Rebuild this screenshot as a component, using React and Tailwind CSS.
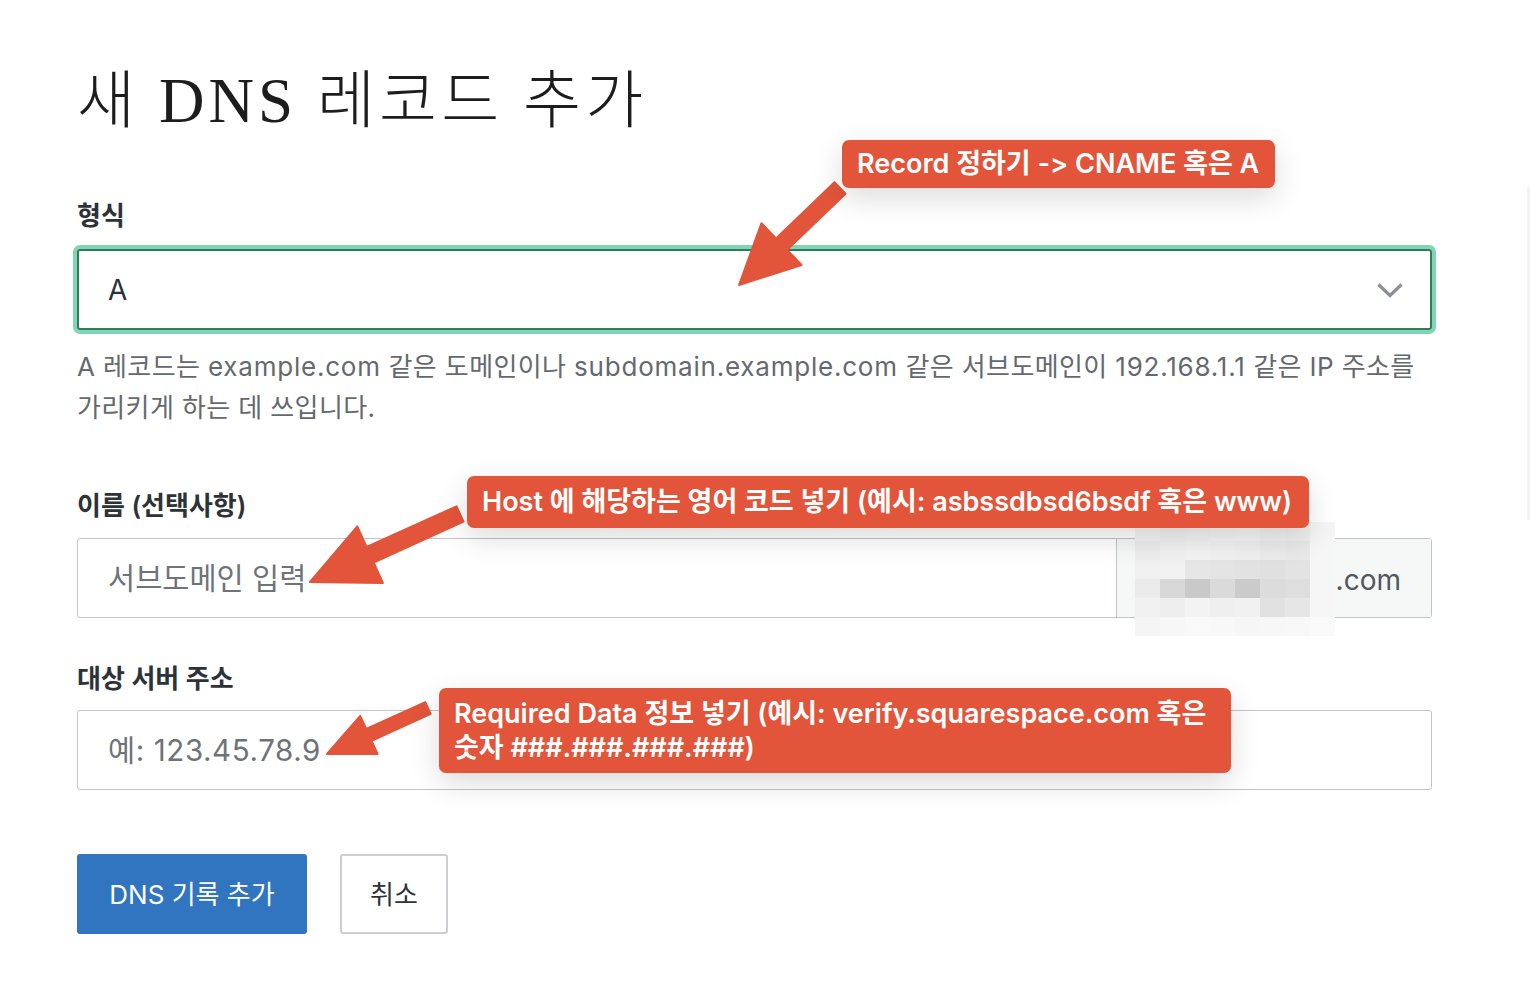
import React from 'react'

// arrow polygon from tail -> tip
function arrowPoints(sx, sy, tx, ty, L, W, w) {
  const dx = tx - sx
  const dy = ty - sy
  const len = Math.sqrt(dx * dx + dy * dy)
  const ux = dx / len
  const uy = dy / len
  const nx = -uy
  const ny = ux
  const bx = tx - ux * L
  const by = ty - uy * L
  const pts = [
    [sx + (nx * w) / 2, sy + (ny * w) / 2],
    [bx + (nx * w) / 2, by + (ny * w) / 2],
    [bx + (nx * W) / 2, by + (ny * W) / 2],
    [tx, ty],
    [bx - (nx * W) / 2, by - (ny * W) / 2],
    [bx - (nx * w) / 2, by - (ny * w) / 2],
    [sx - (nx * w) / 2, sy - (ny * w) / 2],
  ]
  return pts.map((p) => p[0].toFixed(1) + ',' + p[1].toFixed(1)).join(' ')
}

const arrows = [
  [840, 188, 739, 285, 59, 58, 16],
  [460, 514, 310, 582, 66, 62, 17],
  [428, 708, 327, 754, 46, 42, 13],
]

// pixelated blur over the domain name
const blurCells = [
  ['#f4f4f4', '#f0f0f0', '#f2f2f2', '#f4f4f4', '#f5f5f5', '#f0f0f0', '#eeeeee', '#f5f5f5'],
  ['#ededed', '#f1f1f1', '#f3f3f3', '#f1f1f1', '#efefef', '#ebebeb', '#e9e9e9', '#f6f6f6'],
  ['#f0f0f0', '#f2f2f2', '#e6e6e6', '#e4e4e4', '#e2e2e2', '#e0e0e0', '#e3e3e3', '#f6f6f6'],
  ['#ebebeb', '#d8d8d8', '#c9c9c9', '#dadada', '#cbcbcb', '#dcdcdc', '#dedede', '#f6f6f6'],
  ['#f1f1f1', '#eeeeee', '#f3f3f3', '#efefef', '#f1f1f1', '#e1e1e1', '#e6e6e6', '#f6f6f6'],
  ['#f5f5f5', '#f7f7f7', '#f9f9f9', '#f8f8f8', '#f6f6f6', '#f7f7f7', '#f8f8f8', '#fafafa'],
]

export default function App() {
  return (
    <div className="relative min-h-screen w-full overflow-hidden bg-white font-['Inter','Noto_Sans_CJK_KR',sans-serif] text-[#2c3338]">
      <div className="pl-[77px] pr-[98px] pt-[63px] pb-[70px]">
        <h1 className="font-['Liberation_Serif','Noto_Sans_CJK_KR',serif] text-[63px] font-light leading-[76px] text-[#1d1d1d] tracking-[0.065em]">
          새 DNS 레코드 추가
        </h1>

        {/* 형식 */}
        <label className="mt-[61px] block text-[26px] font-semibold leading-[32px]">형식</label>
        <div className="mt-[17px] flex h-[81px] items-center justify-between rounded-[3px] border-2 border-[#2f7b5a] pl-[29px] pr-[26px] ring-4 ring-[#80d5b4]">
          <span className="text-[28px] text-[#2c3338]">A</span>
          <svg width="28" height="18" viewBox="0 0 28 18" fill="none">
            <path d="M2.5 3.5 L14 14.5 L25.5 3.5" stroke="#8c8f94" strokeWidth="3.2" />
          </svg>
        </div>
        <p className="mt-[16px] text-[26px] leading-[41px] text-[#646970] tracking-[0.015em]">
          A 레코드는 <span className="tracking-[0.03em]">example.com</span> 같은 도메인이나{' '}
          <span className="tracking-[0.03em]">subdomain.example.com</span> 같은 서브도메인이{' '}
          <span className="tracking-[0.03em]">192.168.1.1</span> 같은 IP 주소를
          <br />
          가리키게 하는 데 쓰입니다.
        </p>

        {/* 이름 */}
        <label className="mt-[62px] block text-[26px] font-semibold leading-[32px]">이름 (선택사항)</label>
        <div className="mt-[16px] flex h-[80px] rounded-[3px] border border-[#c3c4c7]">
          <div className="flex flex-1 items-center pl-[30px] text-[29.5px] text-[#6e7379]">서브도메인 입력</div>
          <div className="flex w-[315px] items-center justify-end border-l border-[#c3c4c7] bg-[#f6f7f7] pr-[30px] pt-[3px] text-[28px] text-[#50575e]">
            .com
          </div>
        </div>

        {/* 대상 서버 주소 */}
        <label className="mt-[45px] block text-[26px] font-semibold leading-[32px]">대상 서버 주소</label>
        <div className="mt-[15px] flex h-[80px] items-center rounded-[3px] border border-[#c3c4c7] pl-[30px] text-[29.5px] tracking-[0.02em] text-[#6e7379]">
          예: 123.45.78.9
        </div>

        {/* buttons */}
        <div className="mt-[64px] flex gap-[33px]">
          <button className="h-[80px] w-[230px] rounded-[3px] bg-[#3174c0] text-[26px] text-white">DNS 기록 추가</button>
          <button className="h-[80px] w-[108px] rounded-[3px] border-2 border-[#cdced1] bg-white text-[26px] text-[#2c3338]">취소</button>
        </div>
      </div>

      {/* blurred domain */}
      <div className="absolute left-[1135px] top-[522px] grid grid-cols-8">
        {blurCells.flat().map((c, i) => (
          <div key={i} className="h-[19px] w-[25px]" style={{ backgroundColor: c }} />
        ))}
      </div>

      {/* right edge strip */}
      <div className="absolute right-0 top-[187px] h-[333px] w-[3px] bg-[#f3f3f3]" />

      {/* arrows */}
      <svg className="pointer-events-none absolute left-0 top-0" width="1530" height="1004">
        {arrows.map((a, i) => (
          <polygon key={i} points={arrowPoints(...a)} fill="#e2553a" stroke="#e2553a" strokeWidth="2" strokeLinejoin="round" />
        ))}
      </svg>

      {/* annotations */}
      <div className="absolute left-[842px] top-[140px] flex h-[48px] w-[433px] items-center rounded-[7px] bg-[#e2553a] pl-[15px] text-[27px] font-semibold whitespace-nowrap text-white shadow-[0_10px_30px_rgba(0,0,0,0.14)]">
        Record 정하기 -&gt; CNAME 혹은 A
      </div>
      <div className="absolute left-[467px] top-[476px] flex h-[52px] w-[842px] items-center rounded-[7px] bg-[#e2553a] pl-[15px] text-[27px] font-semibold whitespace-nowrap text-white shadow-[0_10px_30px_rgba(0,0,0,0.14)]">
        Host 에 해당하는 영어 코드 넣기 (예시: asbssdbsd6bsdf 혹은 www)
      </div>
      <div className="absolute left-[439px] top-[688px] h-[85px] w-[792px] rounded-[7px] bg-[#e2553a] pl-[15px] pt-[9px] text-[27px] font-semibold leading-[34px] text-white shadow-[0_10px_30px_rgba(0,0,0,0.14)]">
        Required Data 정보 넣기 (예시: verify.squarespace.com 혹은
        <br />
        숫자 ###.###.###.###)
      </div>
    </div>
  )
}
